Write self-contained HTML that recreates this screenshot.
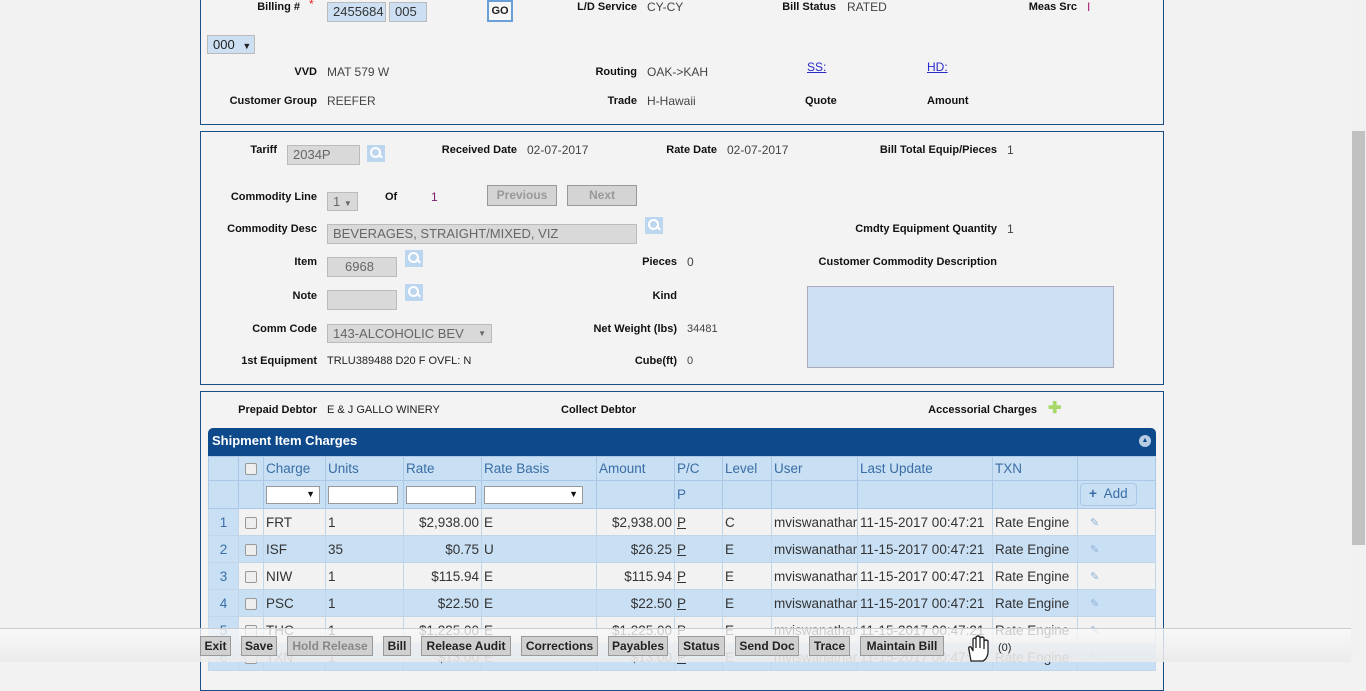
<!DOCTYPE html>
<html><head><meta charset="utf-8"><style>
*{box-sizing:border-box;margin:0;padding:0}
body{width:1366px;height:662px;overflow:hidden;background:#f2f2f2;font-family:"Liberation Sans",Arial,sans-serif;position:relative;color:#333}
.a{position:absolute;white-space:nowrap}
.l{position:absolute;font-weight:bold;font-size:11px;color:#111;text-align:right;width:200px;white-space:nowrap;line-height:13px}
.v{position:absolute;font-size:12px;color:#444;white-space:nowrap;line-height:13px}
.panel{position:absolute;left:200px;width:964px;border:1px solid #1b4e86;background:#f3f3f3}
.inp{position:absolute;background:#d9d9d9;border:1px solid #bbb;font-size:13px;color:#666;padding-left:5px;line-height:17px}
.srch{position:absolute;width:18px;height:17px;background:#bcd6ef}
.srch:before{content:"";position:absolute;left:3px;top:2px;width:7px;height:7px;border:2px solid #fff;border-radius:50%}
.srch:after{content:"";position:absolute;left:11px;top:10px;width:5px;height:2px;background:#fff;transform:rotate(45deg)}
.gbtn{position:absolute;background:#d4d4d4;border:1px solid #999;font-weight:bold;font-size:12px;color:#999;text-align:center;line-height:18px}
table{border-collapse:collapse;position:absolute;left:208px;top:456px;width:947px;font-size:13.5px;table-layout:fixed}
td{height:27px;border:1px solid #c2d6ea;padding:0 2px;white-space:nowrap;overflow:hidden;color:#333}
tr.h td{background:#c8dff4;color:#3a6ea5;height:24px;border-color:#abc9e6}
tr.f td{background:#c8dff4;height:28px;border-color:#abc9e6}
tr.o td{background:#f2f2f2}
tr.e td{background:#c8dff4}
td.n{background:#c8dff4 !important;color:#3a6ea5;text-align:center}
.r{text-align:right}
.cb{display:inline-block;width:12px;height:12px;border:1px solid #999;border-radius:2px;background:#eee;vertical-align:middle;margin-left:4px}
.sel{display:inline-block;height:18px;background:#fff;border:1px solid #999;vertical-align:middle;position:relative}
.sel:after{content:"▼";position:absolute;right:4px;top:2px;font-size:9px;color:#111}
.ti{display:inline-block;height:18px;background:#fff;border:1px solid #999;vertical-align:middle}
.pen{color:#8fb0d6;font-size:11px;padding-left:12px}
.bar{position:absolute;left:0;top:628px;width:1351px;height:34px;background:linear-gradient(rgba(250,250,250,0.75),rgba(235,235,235,0.9));border-top:1px solid #ccc}
.b{position:absolute;top:636px;height:20px;background:#d0d0d0;border:1px solid #999;font-weight:bold;font-size:12px;color:#222;line-height:18px;text-align:center;font-family:"Liberation Sans Narrow","Liberation Sans",sans-serif}
</style></head><body>

<div class="panel" style="top:-2px;height:127px"></div>
<div class="l" style="left:100px;top:1px">Billing #</div><span class="a" style="left:309px;top:-3px;color:#e22;font-size:12px">*</span>
<div class="inp" style="left:327px;top:2px;width:59px;height:20px;background:#cde0f3;color:#333;font-size:13px">2455684</div>
<div class="inp" style="left:389px;top:2px;width:38px;height:20px;background:#cde0f3;color:#333;font-size:13px">005</div>
<div class="a" style="left:487px;top:0;width:26px;height:22px;border:2px solid #6a9fd8;background:#f7f7f7;font-weight:bold;font-size:11px;color:#222;text-align:center;line-height:18px">GO</div>
<div class="l" style="left:437px;top:1px">L/D Service</div><div class="v" style="left:647px;top:1px">CY-CY</div>
<div class="l" style="left:636px;top:1px">Bill Status</div><div class="v" style="left:847px;top:1px">RATED</div>
<div class="l" style="left:877px;top:1px">Meas Src</div><div class="v" style="left:1087px;top:1px;color:#a0206e">I</div>
<div class="inp" style="left:207px;top:35px;width:48px;height:19px;background:#cde0f3;color:#222;font-size:13px">000 <span style="font-size:9px;margin-left:4px">▼</span></div>
<div class="l" style="left:117px;top:66px">VVD</div><div class="v" style="left:327px;top:66px">MAT 579 W</div>
<div class="l" style="left:437px;top:66px">Routing</div><div class="v" style="left:647px;top:66px">OAK-&gt;KAH</div>
<div class="v" style="left:807px;top:61px;color:#2a2acb;text-decoration:underline">SS:</div>
<div class="v" style="left:927px;top:61px;color:#2a2acb;text-decoration:underline">HD:</div>
<div class="l" style="left:117px;top:95px">Customer Group</div><div class="v" style="left:327px;top:95px">REEFER</div>
<div class="l" style="left:437px;top:95px">Trade</div><div class="v" style="left:647px;top:95px">H-Hawaii</div>
<div class="l" style="left:805px;top:95px;text-align:left">Quote</div>
<div class="l" style="left:927px;top:95px;text-align:left">Amount</div>

<div class="panel" style="top:131px;height:254px"></div>
<div class="l" style="left:77px;top:144px">Tariff</div>
<div class="inp" style="left:287px;top:145px;width:73px;height:20px;font-size:13px">2034P</div>
<div class="srch" style="left:367px;top:145px"></div>
<div class="l" style="left:317px;top:144px">Received Date</div><div class="v" style="left:527px;top:144px">02-07-2017</div>
<div class="l" style="left:517px;top:144px">Rate Date</div><div class="v" style="left:727px;top:144px">02-07-2017</div>
<div class="l" style="left:797px;top:144px">Bill Total Equip/Pieces</div><div class="v" style="left:1007px;top:144px">1</div>
<div class="l" style="left:117px;top:191px">Commodity Line</div>
<div class="inp" style="left:327px;top:192px;width:31px;height:19px;font-size:13px">1 <span style="font-size:8px">▼</span></div>
<div class="l" style="left:385px;top:191px;text-align:left">Of</div>
<div class="v" style="left:431px;top:191px;color:#7a1a6e">1</div>
<div class="gbtn" style="left:487px;top:185px;width:70px;height:21px">Previous</div>
<div class="gbtn" style="left:567px;top:185px;width:70px;height:21px">Next</div>
<div class="l" style="left:117px;top:223px">Commodity Desc</div>
<div class="inp" style="left:327px;top:224px;width:310px;height:20px;font-size:13px">BEVERAGES, STRAIGHT/MIXED, VIZ</div>
<div class="srch" style="left:645px;top:217px"></div>
<div class="l" style="left:797px;top:223px">Cmdty Equipment Quantity</div><div class="v" style="left:1007px;top:223px">1</div>
<div class="l" style="left:117px;top:256px">Item</div>
<div class="inp" style="left:327px;top:257px;width:70px;height:20px;padding-left:17px;font-size:13px">6968</div>
<div class="srch" style="left:405px;top:250px"></div>
<div class="l" style="left:477px;top:256px">Pieces</div><div class="v" style="left:687px;top:256px">0</div>
<div class="l" style="left:797px;top:256px">Customer Commodity Description</div>
<div class="l" style="left:117px;top:290px">Note</div>
<div class="inp" style="left:327px;top:290px;width:70px;height:20px"></div>
<div class="srch" style="left:405px;top:284px"></div>
<div class="l" style="left:477px;top:290px">Kind</div>
<div class="a" style="left:807px;top:286px;width:307px;height:82px;background:#cde0f3;border:1px solid #aab"></div>
<div class="l" style="left:117px;top:323px">Comm Code</div>
<div class="inp" style="left:327px;top:324px;width:165px;height:19px;font-size:13px">143-ALCOHOLIC BEV<span style="position:absolute;right:5px;font-size:8px">▼</span></div>
<div class="l" style="left:477px;top:323px">Net Weight (lbs)</div><div class="v" style="left:687px;top:323px;font-size:11px">34481</div>
<div class="l" style="left:117px;top:355px">1st Equipment</div><div class="v" style="left:327px;top:355px;font-size:11px;color:#222">TRLU389488 D20 F OVFL: N</div>
<div class="l" style="left:477px;top:355px">Cube(ft)</div><div class="v" style="left:687px;top:355px;font-size:11px">0</div>

<div class="panel" style="top:391px;height:300px"></div>
<div class="l" style="left:117px;top:404px">Prepaid Debtor</div><div class="v" style="left:327px;top:404px;font-size:11px;color:#222">E &amp; J GALLO WINERY</div>
<div class="l" style="left:561px;top:404px;text-align:left">Collect Debtor</div>
<div class="l" style="left:837px;top:404px">Accessorial Charges</div>
<div class="a" style="left:1048px;top:401px;width:12px;height:15px;color:#a6d86a;font-weight:bold;font-size:16px;line-height:15px">✚</div>
<div class="a" style="left:208px;top:428px;width:948px;height:28px;background:#0e4a8b;border-radius:5px 5px 0 0;color:#fff;font-weight:bold;font-size:13px;line-height:26px;padding-left:4px">Shipment Item Charges</div>
<div class="a" style="left:1139px;top:435px;width:12px;height:12px;border-radius:50%;background:#b8cde3;color:#0e4a8b;font-size:7px;text-align:center;line-height:11px">▲</div>
<table>
<colgroup><col style="width:30px"><col style="width:25px"><col style="width:62px"><col style="width:78px"><col style="width:78px"><col style="width:115px"><col style="width:78px"><col style="width:48px"><col style="width:49px"><col style="width:86px"><col style="width:135px"><col style="width:85px"><col style="width:78px"></colgroup>
<tr class="h"><td></td><td><span class="cb"></span></td><td>Charge</td><td>Units</td><td>Rate</td><td>Rate Basis</td><td>Amount</td><td>P/C</td><td>Level</td><td>User</td><td>Last Update</td><td>TXN</td><td></td></tr>
<tr class="f"><td></td><td></td><td><span class="sel" style="width:54px"></span></td><td><span class="ti" style="width:70px"></span></td><td><span class="ti" style="width:70px"></span></td><td><span class="sel" style="width:99px"></span></td><td></td><td style="color:#3a6ea5">P</td><td></td><td></td><td></td><td></td><td><span style="display:inline-block;border:1px solid #a9c8e6;border-radius:4px;padding:2px 8px 4px;color:#3a6ea5"><b>+</b>&nbsp; Add</span></td></tr>
<tr class="o"><td class="n">1</td><td><span class="cb"></span></td><td>FRT</td><td>1</td><td class="r">$2,938.00</td><td>E</td><td class="r">$2,938.00</td><td><u>P</u></td><td>C</td><td>mviswanathar</td><td>11-15-2017 00:47:21</td><td>Rate Engine</td><td class="pen">✎</td></tr>
<tr class="e"><td class="n">2</td><td><span class="cb"></span></td><td>ISF</td><td>35</td><td class="r">$0.75</td><td>U</td><td class="r">$26.25</td><td><u>P</u></td><td>E</td><td>mviswanathar</td><td>11-15-2017 00:47:21</td><td>Rate Engine</td><td class="pen">✎</td></tr>
<tr class="o"><td class="n">3</td><td><span class="cb"></span></td><td>NIW</td><td>1</td><td class="r">$115.94</td><td>E</td><td class="r">$115.94</td><td><u>P</u></td><td>E</td><td>mviswanathar</td><td>11-15-2017 00:47:21</td><td>Rate Engine</td><td class="pen">✎</td></tr>
<tr class="e"><td class="n">4</td><td><span class="cb"></span></td><td>PSC</td><td>1</td><td class="r">$22.50</td><td>E</td><td class="r">$22.50</td><td><u>P</u></td><td>E</td><td>mviswanathar</td><td>11-15-2017 00:47:21</td><td>Rate Engine</td><td class="pen">✎</td></tr>
<tr class="o"><td class="n">5</td><td><span class="cb"></span></td><td>THC</td><td>1</td><td class="r">$1,225.00</td><td>E</td><td class="r">$1,225.00</td><td><u>P</u></td><td>E</td><td>mviswanathar</td><td>11-15-2017 00:47:21</td><td>Rate Engine</td><td class="pen">✎</td></tr>
<tr class="e"><td class="n">6</td><td><span class="cb"></span></td><td>TXN</td><td>1</td><td class="r">$13.00</td><td>E</td><td class="r">$13.00</td><td><u>P</u></td><td>E</td><td>mviswanathar</td><td>11-15-2017 00:47:21</td><td>Rate Engine</td><td class="pen">✎</td></tr>
</table>

<div class="a" style="left:1351px;top:0;width:15px;height:662px;background:#f1f1f1"></div>
<div class="a" style="left:1352px;top:131px;width:13px;height:414px;background:#c1c1c1"></div>

<div class="bar"></div>
<div class="b" style="left:200px;width:31px">Exit</div>
<div class="b" style="left:241px;width:36px">Save</div>
<div class="b" style="left:287px;width:86px;color:#888">Hold Release</div>
<div class="b" style="left:383px;width:28px">Bill</div>
<div class="b" style="left:421px;width:90px">Release Audit</div>
<div class="b" style="left:521px;width:77px">Corrections</div>
<div class="b" style="left:608px;width:60px">Payables</div>
<div class="b" style="left:678px;width:47px">Status</div>
<div class="b" style="left:735px;width:64px">Send Doc</div>
<div class="b" style="left:809px;width:41px">Trace</div>
<div class="b" style="left:860px;width:84px">Maintain Bill</div>
<svg class="a" style="left:965px;top:634px" width="30" height="28" viewBox="0 0 30 28"><path d="M6 27 L4 16 Q3 12 6 13 L8 17 L8 5 Q9 3 11 5 L11 14 L11 3 Q13 1 15 3 L15 14 L15 4 Q17 2 19 4 L19 15 L19 7 Q21 5 23 7 L23 19 Q22 25 18 27 Z" fill="#fff" stroke="#222" stroke-width="1.3"/></svg>
<div class="a" style="left:998px;top:642px;font-size:11px;color:#222">(0)</div>
</body></html>
